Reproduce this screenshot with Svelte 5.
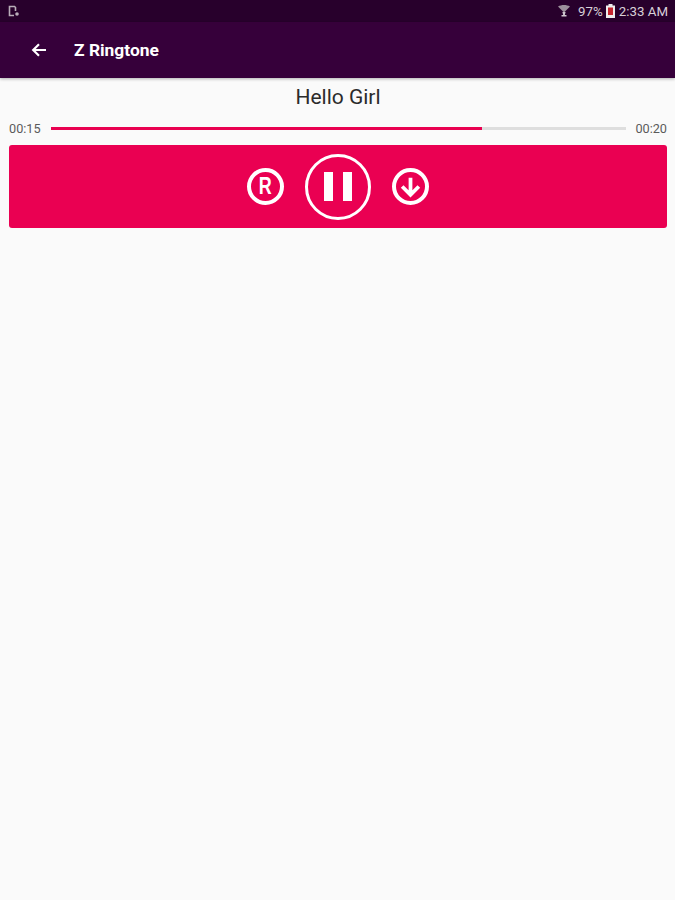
<script>
  let title = 'Hello Girl';
  let elapsed = '00:15';
  let total = '00:20';
  let progress = 75;
</script>

<div class="screen">
  <div class="status-bar">
    <svg class="sim" width="14" height="12" viewBox="0 0 14 12">
      <path d="M7 10.5H2.5V1.5H7.5L8.5 2.5V6" fill="none" stroke="#b9adb9" stroke-width="1.6"/>
      <circle cx="10" cy="9" r="1.8" fill="#b9adb9"/>
    </svg>
    <div class="status-right">
      <svg class="wifi" width="14" height="14" viewBox="0 0 14 14">
        <path d="M1 2.5C4.5 0.5 9.5 0.5 13 2.5L7 8.5Z" fill="#9c909c"/>
        <path d="M5.4 8H8.6L7.8 11H9.5V12.5H4.5V11H6.2Z" fill="#cfc7cf"/>
      </svg>
      <span class="pct">97%</span>
      <svg class="battery" width="9" height="14" viewBox="0 0 9 14">
        <rect x="2.5" y="0" width="4" height="2" fill="#eee"/>
        <rect x="0" y="1.5" width="9" height="12.5" fill="#eee"/>
        <rect x="2" y="3.5" width="5" height="7.5" fill="#c5262f"/>
      </svg>
      <span class="clock">2:33 AM</span>
    </div>
  </div>

  <header class="app-bar">
    <svg class="back" width="16" height="16" viewBox="0 0 16 16">
      <path d="M15 8H2.5M8 2.2L2.2 8L8 13.8" fill="none" stroke="#fff" stroke-width="2.2"/>
    </svg>
    <h1>Z Ringtone</h1>
  </header>

  <main class="content">
    <div class="song-title">{title}</div>

    <div class="progress-row">
      <span class="time">{elapsed}</span>
      <div class="track">
        <div class="fill" style="width: {progress}%"></div>
      </div>
      <span class="time">{total}</span>
    </div>

    <div class="player">
      <button class="ctl small" aria-label="Repeat">
        <span class="r">R</span>
      </button>
      <button class="ctl big" aria-label="Pause">
        <span class="bar"></span>
        <span class="bar"></span>
      </button>
      <button class="ctl small" aria-label="Download">
        <svg width="25" height="25" viewBox="0 0 24 24">
          <path d="M12 3.5V20M4 12L12 20L20 12" fill="none" stroke="#fff" stroke-width="3.6"/>
        </svg>
      </button>
    </div>
  </main>
</div>

<style>
  :global(body) {
    margin: 0;
    background: #fafafa;
  }

  .screen {
    width: 675px;
    height: 900px;
    display: flex;
    flex-direction: column;
    background: #fafafa;
    font-family: Roboto, "Liberation Sans", sans-serif;
    overflow: hidden;
  }

  .status-bar {
    height: 22px;
    background: #28002c;
    display: flex;
    align-items: center;
    justify-content: space-between;
    padding: 0 7px;
    flex-shrink: 0;
  }

  .status-right {
    display: flex;
    align-items: center;
    gap: 1px;
  }

  .wifi {
    margin-right: 6px;
  }

  .pct,
  .clock {
    font-size: 13.3px;
    color: #d8d0d8;
  }

  .battery {
    margin: 0 3px 0 2px;
  }

  .app-bar {
    height: 56px;
    background: #36003a;
    display: flex;
    align-items: center;
    padding-left: 31px;
    box-shadow: 0 1px 3px rgba(0, 0, 0, 0.3);
    flex-shrink: 0;
  }

  .back {
    margin-right: 27px;
  }

  h1 {
    margin: 0;
    font-size: 17.4px;
    font-weight: 700;
    color: #fff;
  }

  .content {
    flex: 1;
    padding: 0 8px 0 9px;
  }

  .song-title {
    text-align: center;
    font-size: 21px;
    line-height: 24px;
    margin-top: 7px;
    color: #2b2b2b;
  }

  .progress-row {
    display: flex;
    align-items: center;
    gap: 10px;
    margin-top: 9px;
    height: 20px;
  }

  .time {
    font-size: 12.7px;
    color: #5a5a5a;
  }

  .track {
    flex: 1;
    height: 3px;
    margin-right: -1px;
    background: #dedede;
  }

  .fill {
    height: 100%;
    background: #e90050;
  }

  .player {
    margin-top: 7px;
    height: 83px;
    background: #ea0052;
    border-radius: 3px;
    display: flex;
    align-items: center;
    justify-content: center;
    gap: 21px;
  }

  .ctl {
    display: flex;
    align-items: center;
    justify-content: center;
    box-sizing: border-box;
    padding: 0;
    background: none;
    border-radius: 50%;
    border: 4px solid #fff;
    color: #fff;
  }

  .small {
    width: 37px;
    height: 37px;
  }

  .big {
    width: 66px;
    height: 66px;
    gap: 10px;
    border-width: 3px;
  }

  .bar {
    width: 9px;
    height: 29px;
    background: #fff;
  }

  .r {
    font-size: 23px;
    font-weight: 700;
    line-height: 1;
    transform: scaleX(0.78);
  }
</style>
